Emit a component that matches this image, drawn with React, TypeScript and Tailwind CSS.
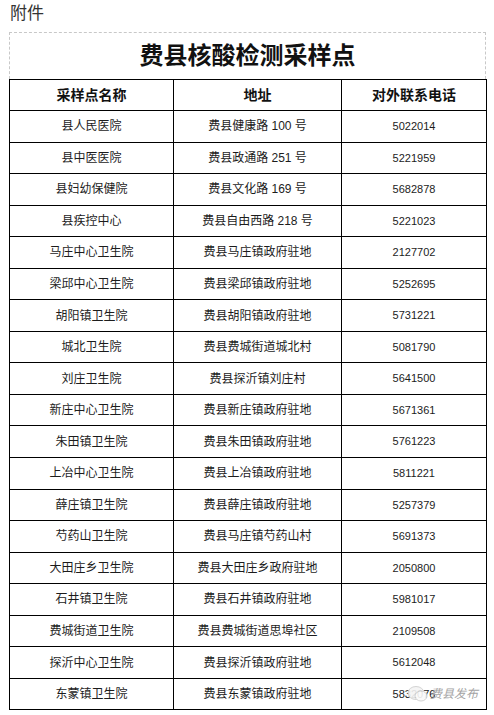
const rows: [string, string, string][] = [
  ["县人民医院", "费县健康路 100 号", "5022014"],
  ["县中医医院", "费县政通路 251 号", "5221959"],
  ["县妇幼保健院", "费县文化路 169 号", "5682878"],
  ["县疾控中心", "费县自由西路 218 号", "5221023"],
  ["马庄中心卫生院", "费县马庄镇政府驻地", "2127702"],
  ["梁邱中心卫生院", "费县梁邱镇政府驻地", "5252695"],
  ["胡阳镇卫生院", "费县胡阳镇政府驻地", "5731221"],
  ["城北卫生院", "费县费城街道城北村", "5081790"],
  ["刘庄卫生院", "费县探沂镇刘庄村", "5641500"],
  ["新庄中心卫生院", "费县新庄镇政府驻地", "5671361"],
  ["朱田镇卫生院", "费县朱田镇政府驻地", "5761223"],
  ["上冶中心卫生院", "费县上冶镇政府驻地", "5811221"],
  ["薛庄镇卫生院", "费县薛庄镇政府驻地", "5257379"],
  ["芍药山卫生院", "费县马庄镇芍药山村", "5691373"],
  ["大田庄乡卫生院", "费县大田庄乡政府驻地", "2050800"],
  ["石井镇卫生院", "费县石井镇政府驻地", "5981017"],
  ["费城街道卫生院", "费县费城街道思埠社区", "2109508"],
  ["探沂中心卫生院", "费县探沂镇政府驻地", "5612048"],
  ["东蒙镇卫生院", "费县东蒙镇政府驻地", "5832076"],
];

const cjk = "font-['Liberation_Sans','Noto_Sans_CJK_SC',sans-serif]";

export default function App() {
  return (
    <div className={`w-[494px] h-[715px] bg-white text-[#1c1c1c] ${cjk} relative overflow-hidden`}>
      <div className="h-[32px] pl-[10px] pt-[3px] text-[17px] leading-[22px] text-[#333]">附件</div>
      <div className="px-[9px]">
        <div className="w-[477px] h-[47px] border-x border-t border-dashed border-[#c8c8c8] flex items-center justify-center">
          <span className="text-[24px] font-bold leading-none text-[#111]">费县核酸检测采样点</span>
        </div>
        <table className="w-[477px] border-collapse table-fixed">
          <colgroup>
            <col className="w-[164px]" />
            <col className="w-[168px]" />
            <col className="w-[145px]" />
          </colgroup>
          <thead>
            <tr className="h-[31px]">
              {["采样点名称", "地址", "对外联系电话"].map((h) => (
                <th key={h} className="border border-black text-center text-[14px] font-bold text-[#111] p-0">
                  {h}
                </th>
              ))}
            </tr>
          </thead>
          <tbody>
            {rows.map(([name, addr, tel]) => (
              <tr key={name} className="h-[31.55px]">
                <td className="border border-black text-center text-[12px] p-0">{name}</td>
                <td className="border border-black text-center text-[12px] p-0">{addr}</td>
                <td className="border border-black text-center text-[11px] p-0">{tel}</td>
              </tr>
            ))}
          </tbody>
        </table>
      </div>
      {/* watermark */}
      <div className="absolute left-[407px] top-[685px] flex items-center gap-[1px]">
        <svg width="22" height="18" viewBox="0 0 22 18" className="opacity-90">
          <ellipse cx="9" cy="8" rx="8" ry="6.5" fill="#f4f4f4" stroke="#cfcfcf" strokeWidth="1" />
          <ellipse cx="14" cy="11" rx="6" ry="5" fill="#fafafa" stroke="#cfcfcf" strokeWidth="1" />
        </svg>
        <span className="text-[12px] italic leading-none text-[#a3a3a3]">费县发布</span>
      </div>
    </div>
  );
}
